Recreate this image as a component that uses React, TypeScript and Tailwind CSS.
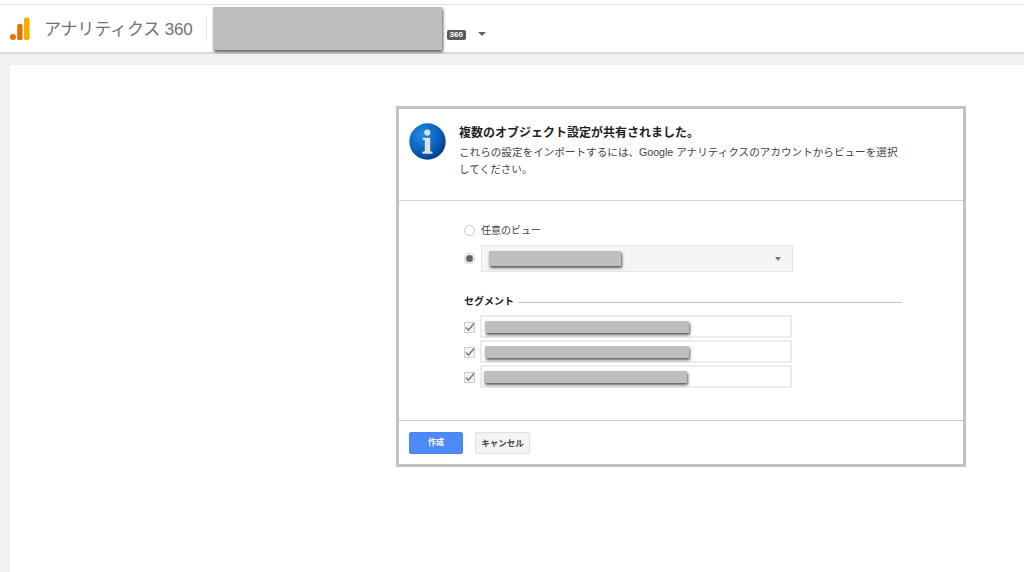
import React from "react";

const FONT = "font-['Liberation_Sans','Noto_Sans_CJK_JP',sans-serif]";

function Logo() {
  return (
    <svg width="20" height="24" viewBox="0 0 20 24" className="shrink-0">
      <circle cx="3" cy="20" r="3" fill="#e37400" />
      <rect x="7.2" y="7" width="5.4" height="16" rx="1.6" fill="#e37400" />
      <rect x="14" y="0.5" width="5.6" height="22.5" rx="1.8" fill="#f9ab00" />
    </svg>
  );
}

function InfoIcon() {
  return (
    <svg width="37" height="37" viewBox="0 0 37 37" className="shrink-0">
      <defs>
        <radialGradient id="g" cx="35%" cy="30%" r="75%">
          <stop offset="0%" stopColor="#1f8ae6" />
          <stop offset="60%" stopColor="#0b62c0" />
          <stop offset="100%" stopColor="#053a84" />
        </radialGradient>
      </defs>
      <circle cx="18.5" cy="18.5" r="18.2" fill="url(#g)" />
      <circle cx="18.3" cy="9.6" r="3.1" fill="#dfe3dc" />
      <path d="M13.6 14.8h7.6v13.2l2.2 1v1.7h-10v-1.7l2.4-1v-11l-2.2-.6z" fill="#dfe3dc" />
    </svg>
  );
}

function Check() {
  return (
    <span className="flex h-[11px] w-[11px] items-center justify-center border border-[#cfcfcf] bg-[#f4f4f4]">
      <svg width="11" height="11" viewBox="0 0 11 11" className="overflow-visible">
        <path d="M2 5.6l2.4 2.6L10 1.6" fill="none" stroke="#7a7a7a" strokeWidth="1.5" />
      </svg>
    </span>
  );
}

function Blur({ w, h, className = "" }: { w: string; h: string; className?: string }) {
  return <div className={`${w} ${h} ${className} rounded-[1px] bg-[#bebebe] shadow-[1px_2px_3px_rgba(0,0,0,0.65)] blur-[0.4px]`} />;
}

function Row({ w, mt = "", pad = "pl-[3px]" }: { w: string; mt?: string; pad?: string }) {
  return (
    <div className={`flex items-center ${mt}`}>
      <div className="mt-[2px] flex w-[16px] justify-start">
        <Check />
      </div>
      <div className={`flex h-[23px] w-[312px] items-center border-2 border-[#ececec] bg-white ${pad}`}>
        <Blur w={w} h="h-[12px]" />
      </div>
    </div>
  );
}

export default function App() {
  return (
    <div className={`${FONT} flex h-[572px] w-[1024px] flex-col overflow-hidden bg-white`}>
      <div className="h-[4px] shrink-0 bg-white" />
      <header className="flex h-[50px] shrink-0 items-center border-t border-t-[#e2e2e2] border-b-2 border-b-[#d9d9d9] bg-white">
        <div className="ml-[10px] mt-[1px]">
          <Logo />
        </div>
        <span className="ml-[14px] mt-[3px] text-[17px] tracking-[-0.15px] whitespace-nowrap text-[#6f7378]">アナリティクス 360</span>
        <div className="ml-[13px] h-[24px] w-px bg-[#e6e6e6]" />
        <Blur w="w-[229px]" h="h-[43px]" className="ml-[6px]" />
        <span className="ml-[5px] mt-[13px] rounded-[2px] bg-[#5a5a5a] px-[3px] text-[8px] leading-[10px] font-bold text-white">360</span>
        <div className="ml-[12px] mt-[11px] h-0 w-0 border-x-[4px] border-t-[4px] border-x-transparent border-t-[#5f6368]" />
      </header>
      <div className="flex-1 bg-[#f1f1f1] pl-[10px] pt-[11px]">
        <main className="h-full bg-white pl-[386px] pt-[41px]">
          <section className="flex h-[361px] w-[570px] flex-col border-[3px] border-[#c2c2c2] bg-white">
            <div className="flex h-[92px] shrink-0 items-start border-b border-[#d4d4d4] pl-[10px] pt-[14px]">
              <InfoIcon />
              <div className="ml-[13px] mt-[1px] w-[445px]">
                <h1 className="text-[12px] leading-[18px] font-bold text-[#1f1f1f]">複数のオブジェクト設定が共有されました。</h1>
                <p className="mt-[2px] text-[10.6px] leading-[16.5px] text-[#444]">
                  これらの設定をインポートするには、Google アナリティクスのアカウントからビューを選択してください。
                </p>
              </div>
            </div>
            <div className="h-[220px] shrink-0 border-b border-[#c8c8c8] pl-[65px] pt-[22px]">
              <div className="flex h-[14px] items-center">
                <span className="h-[11px] w-[11px] rounded-full border border-[#c8c8c8] bg-white" />
                <span className="ml-[6px] text-[10px] text-[#444]">任意のビュー</span>
              </div>
              <div className="mt-[8px] flex items-center">
                <span className="flex h-[11px] w-[11px] items-center justify-center rounded-full border border-[#c8c8c8] bg-white">
                  <span className="h-[7px] w-[7px] rounded-full bg-[#666]" />
                </span>
                <div className="ml-[6px] flex h-[27px] w-[312px] items-center justify-between border border-[#e6e6e6] bg-[#f5f5f5] pl-[7px] pr-[11px]">
                  <Blur w="w-[132px]" h="h-[15px]" />
                  <div className="h-0 w-0 border-x-[3px] border-t-[4px] border-x-transparent border-t-[#777]" />
                </div>
              </div>
              <div className="mt-[22px] flex w-[438px] items-center">
                <span className="text-[10px] leading-[16px] font-bold text-[#222]">セグメント</span>
                <div className="ml-[4px] h-px flex-1 bg-[#c4c4c4]" />
              </div>
              <Row w="w-[204px]" mt="mt-[5px]" />
              <Row w="w-[204px]" mt="mt-[2px]" />
              <Row w="w-[203px]" mt="mt-[2px]" pad="pl-[2px]" />
            </div>
            <div className="flex flex-1 items-start gap-[12px] pl-[10px] pt-[11px]">
              <button className="h-[22px] w-[54px] rounded-[2px] border border-[#4a86e8] bg-[#4d8af5] text-[8px] font-bold text-white">作成</button>
              <button className="h-[22px] w-[55px] rounded-[2px] border border-[#e0e0e0] bg-[#f3f3f3] text-[8.5px] font-bold text-[#444]">キャンセル</button>
            </div>
          </section>
        </main>
      </div>
    </div>
  );
}
